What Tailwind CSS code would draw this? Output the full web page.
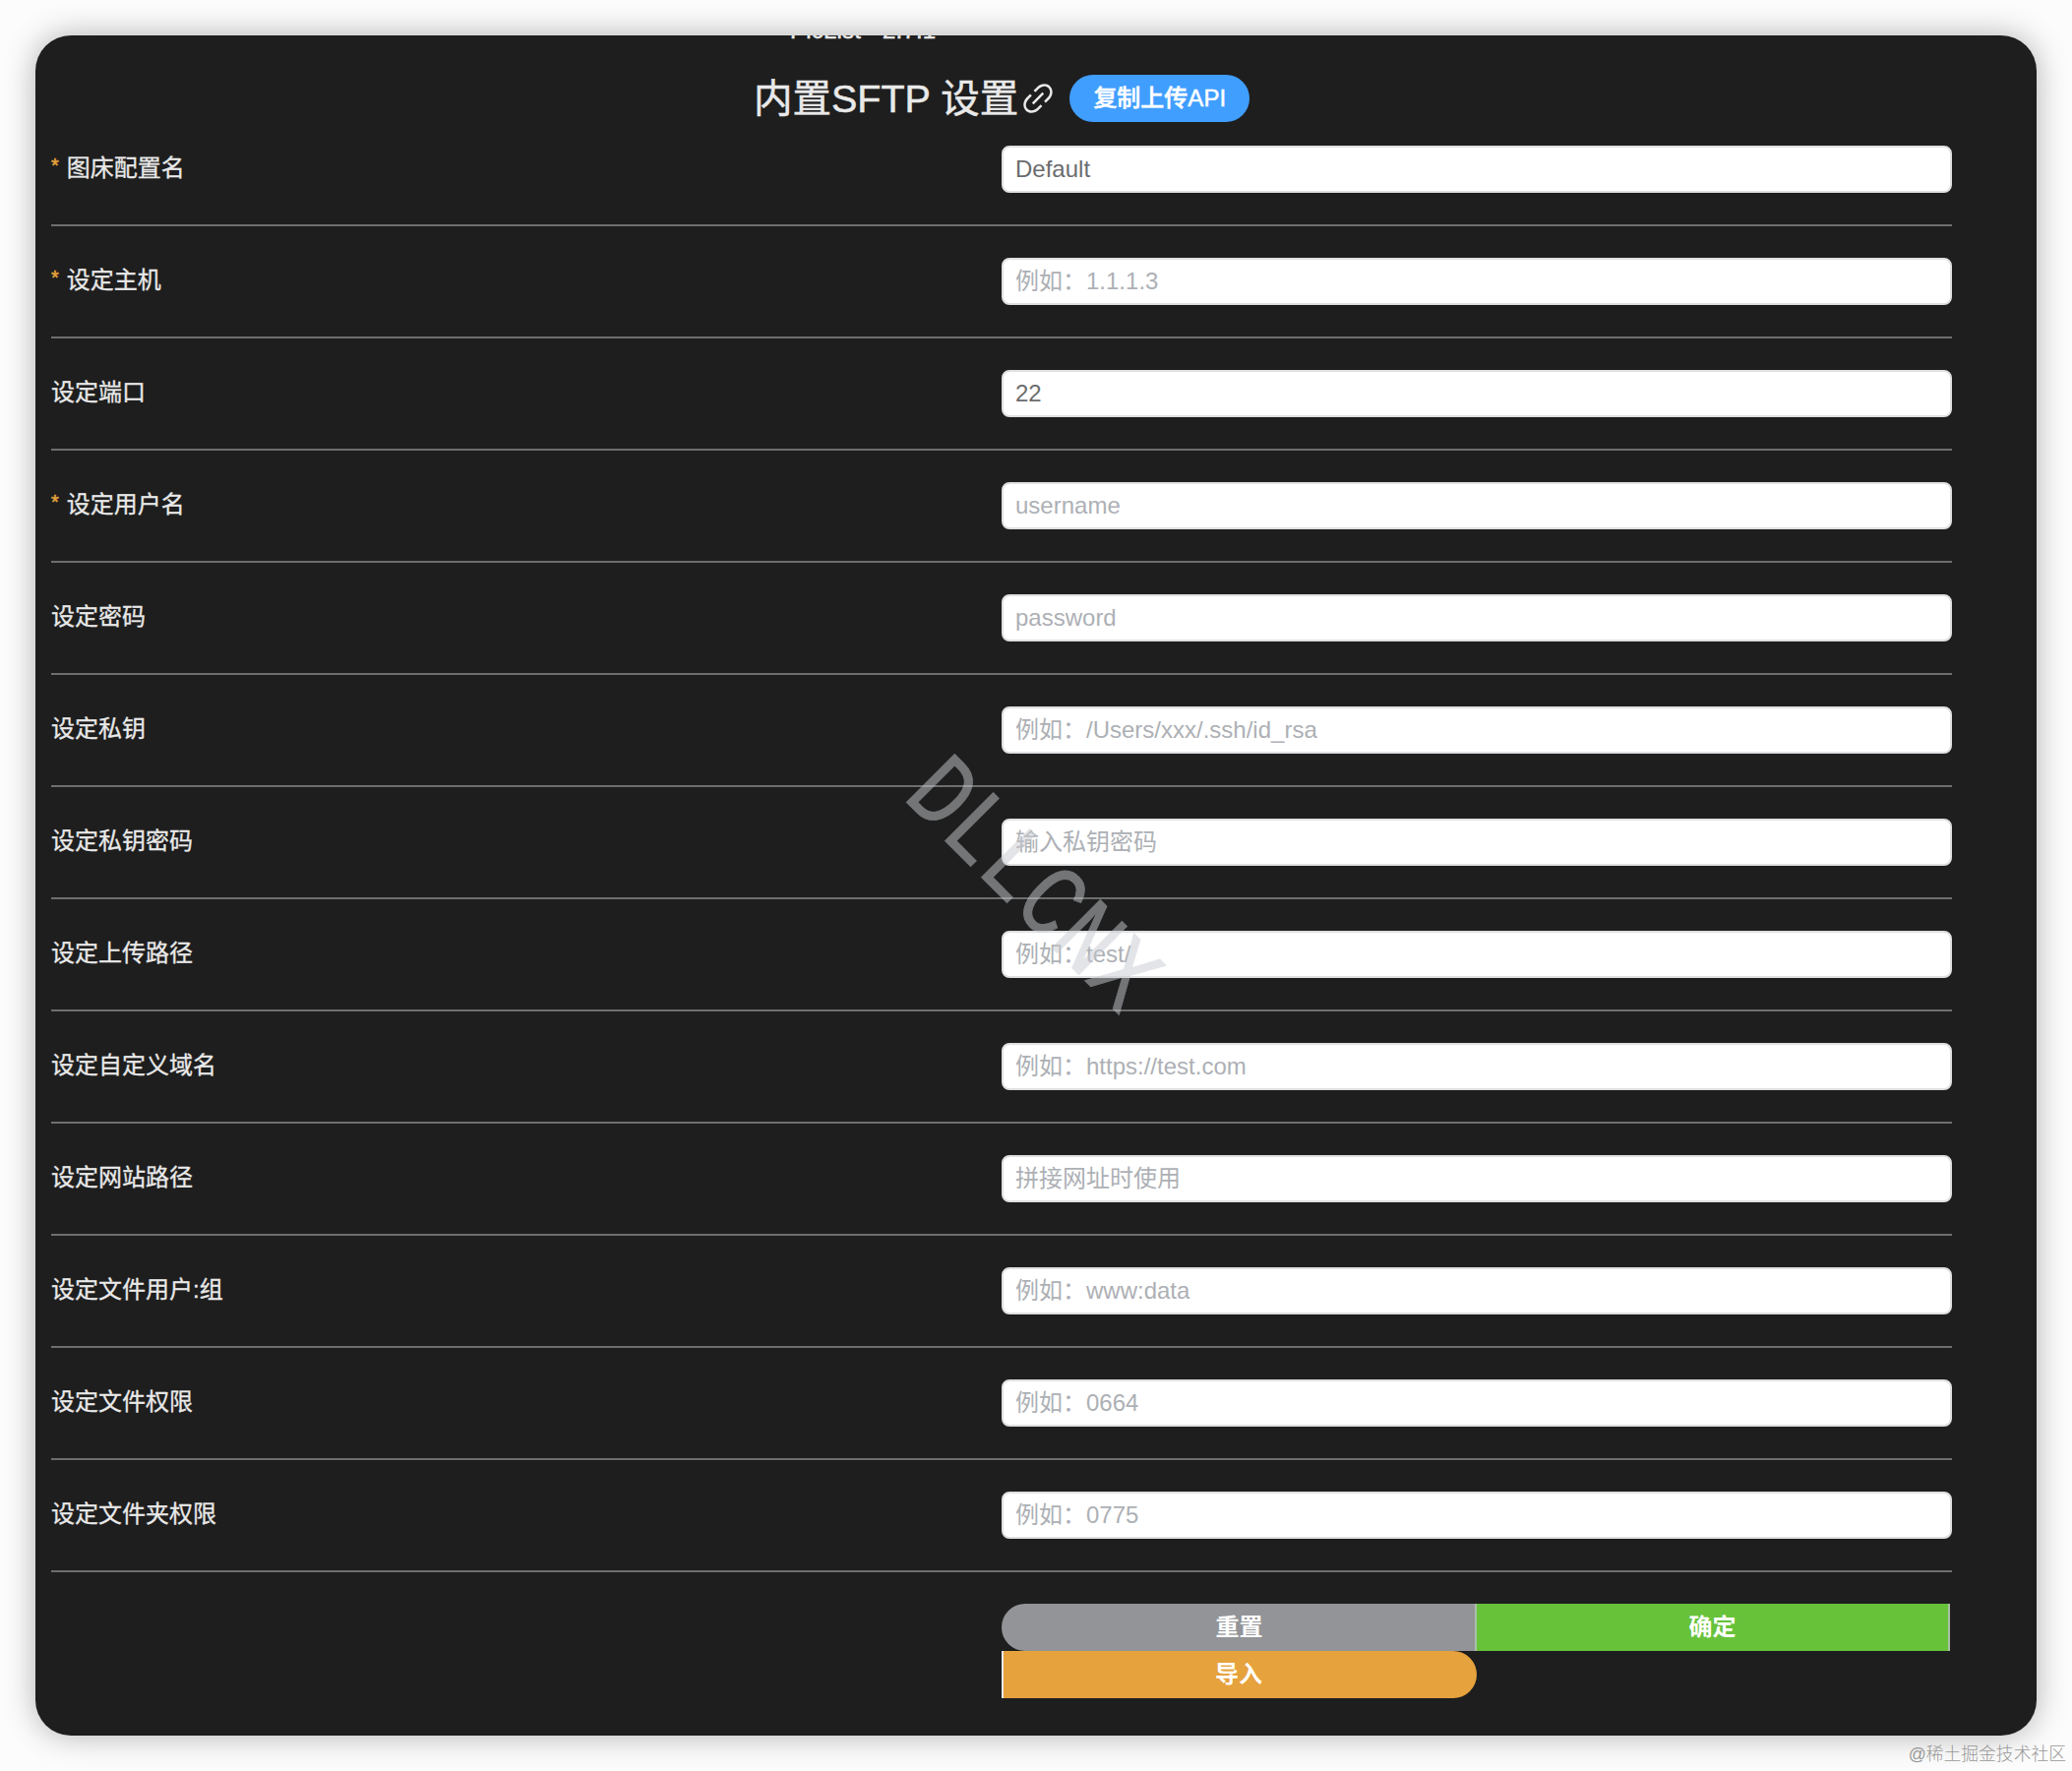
<!DOCTYPE html>
<html lang="zh-CN">
<head>
    <meta charset="UTF-8">
    <meta name="viewport" content="width=device-width, initial-scale=1.0">
    <title>PicList</title>
    <script src="https://cdn.jsdelivr.net/npm/@tailwindcss/browser@4"></script>
</head>
<body class="relative h-[1800px] w-[2106px] overflow-hidden bg-[#fcfcfc] p-9 font-['Liberation_Sans','Noto_Sans_CJK_SC',sans-serif] text-2xl">
    <main class="relative h-[1728px] overflow-hidden rounded-[36px] bg-[#1e1e1e] px-4 text-[#e9e9e9] shadow-[0_0_32px_rgba(0,0,0,0.3)]">
        <!-- Window title, mostly scrolled out of view -->
        <div class="absolute -top-[17px] left-[767px] text-2xl leading-6 tracking-[0.2px] whitespace-pre [-webkit-text-stroke:0.5px]">PicList - 2.7.1</div>

        <!-- Header -->
        <header class="flex h-28 items-center pl-[714px] pt-4">
            <h1 class="pt-0.5 text-[39.5px] leading-none whitespace-nowrap [-webkit-text-stroke:0.5px]">内置SFTP 设置</h1>
            <svg class="size-10 shrink-0" viewBox="0 0 1024 1024" fill="currentColor">
                <path d="M715.648 625.152 670.4 579.904l90.496-90.56c75.008-74.944 85.12-186.368 22.656-248.896-62.528-62.464-173.952-52.352-248.96 22.656L444.16 353.6l-45.248-45.248 90.496-90.496c100.032-99.968 251.968-110.08 339.456-22.656 87.488 87.488 77.312 239.424-22.656 339.456l-90.496 90.496zm-90.496 90.496-90.496 90.496C434.624 906.112 282.688 916.224 195.2 828.8c-87.488-87.488-77.312-239.424 22.656-339.456l90.496-90.496 45.248 45.248-90.496 90.56c-75.008 74.944-85.12 186.368-22.656 248.896 62.528 62.464 173.952 52.352 248.96-22.656l90.496-90.496zm0-362.048 45.248 45.248L398.848 670.4 353.6 625.152z" />
            </svg>
            <button class="ml-3 h-12 w-[183px] rounded-full bg-[#409eff] font-medium text-white [-webkit-text-stroke:0.5px]">复制上传API</button>
        </header>

        <!-- Form rows -->
        <form id="form" class="w-[1932px]"></form>

        <!-- Actions -->
        <div class="ml-[966px] flex w-[966px] flex-wrap font-bold text-white">
            <button class="h-12 w-[483px] rounded-l-full bg-[#929497]">重置</button>
            <button class="-ml-0.5 h-12 w-[483px] border-x-2 border-[#a9bfa6] bg-[#67c23a]">确定</button>
            <button class="h-12 w-[483px] rounded-r-full border-l-2 border-[#e9e9eb] bg-[#e6a23c] pr-[3px]">导入</button>
        </div>
    </main>

    <!-- Watermarks -->
    <div class="absolute left-[1047px] top-[902px] -translate-x-1/2 -translate-y-1/2 rotate-45 scale-x-[0.83] font-['Liberation_Mono',monospace] text-[105px] leading-none text-[#c8cbd0] opacity-50 [-webkit-text-stroke:1px]">DLLCNX</div>
    <div class="absolute right-[6px] bottom-[3px] text-[17.8px] leading-[28px] font-light whitespace-nowrap text-[#999]">@稀土掘金技术社区</div>

    <script>
        const fields = [
            { label: '图床配置名', required: true, value: 'Default' },
            { label: '设定主机', required: true, placeholder: '例如：1.1.1.3' },
            { label: '设定端口', value: '22' },
            { label: '设定用户名', required: true, placeholder: 'username' },
            { label: '设定密码', placeholder: 'password' },
            { label: '设定私钥', placeholder: '例如：/Users/xxx/.ssh/id_rsa' },
            { label: '设定私钥密码', placeholder: '输入私钥密码' },
            { label: '设定上传路径', placeholder: '例如：test/' },
            { label: '设定自定义域名', placeholder: '例如：https://test.com' },
            { label: '设定网站路径', placeholder: '拼接网址时使用' },
            { label: '设定文件用户:组', placeholder: '例如：www:data' },
            { label: '设定文件权限', placeholder: '例如：0664' },
            { label: '设定文件夹权限', placeholder: '例如：0775' }
        ];

        document.getElementById('form').innerHTML = fields.map(field => `
            <div class="mb-8 grid grid-cols-2 border-b-2 border-[#6d6e6e] pb-8">
                <label class="flex h-12 items-center pb-[3px] [-webkit-text-stroke:0.3px]">
                    ${field.required ? '<span class="mr-2 pb-1.5 text-xl text-[#e6a23c] [-webkit-text-stroke:0.5px]">*</span>' : ''}${field.label}
                </label>
                <input type="text" value="${field.value || ''}" placeholder="${field.placeholder || ''}"
                    class="h-12 w-full rounded-lg border-2 border-[#dfe0e2] bg-white px-3 pb-px text-[#6b6c6e] placeholder:text-[#adb0b5]">
            </div>
        `).join('');
    </script>
</body>
</html>
